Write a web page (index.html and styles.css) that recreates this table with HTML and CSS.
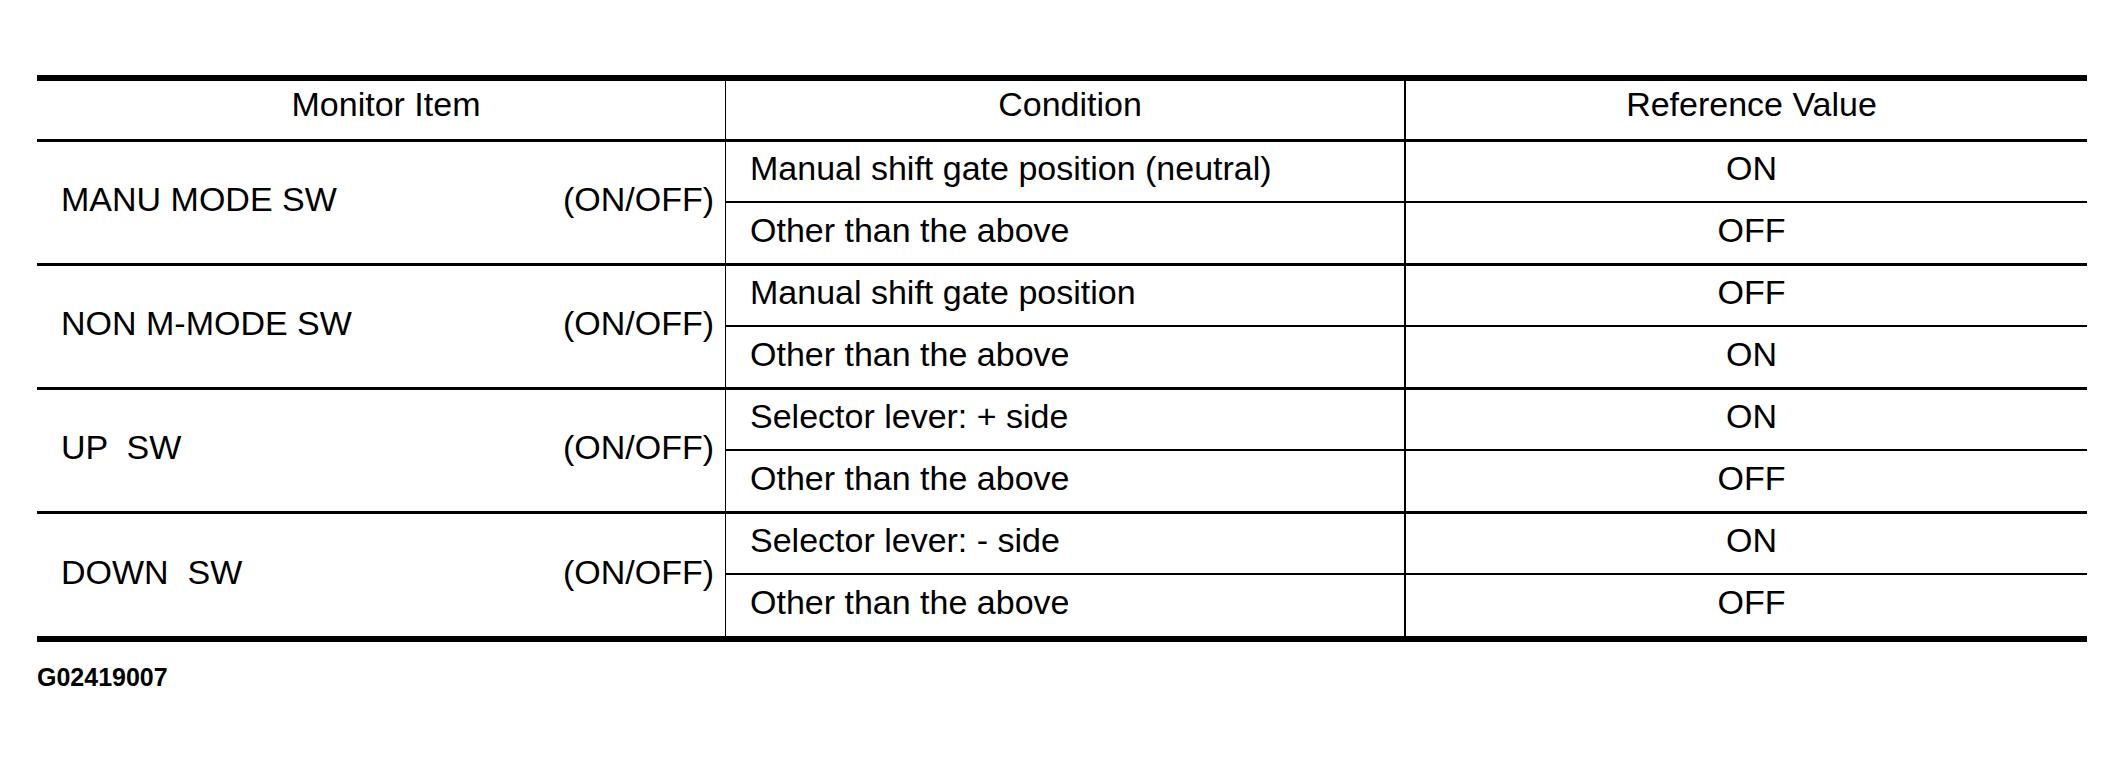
FILE: index.html
```html
<!DOCTYPE html>
<html lang="en">
<head>
<meta charset="utf-8">
<title>Monitor Items</title>
<link rel="stylesheet" href="styles.css">
</head>
<body>
<div class="page">
  <div class="spec">
    <div class="th c1">Monitor Item</div>
    <div class="th c2">Condition</div>
    <div class="th c3">Reference Value</div>

    <div class="item c1"><span class="name">MANU MODE SW</span><span class="unit">(ON/OFF)</span></div>
    <div class="cond c2 first">Manual shift gate position (neutral)</div>
    <div class="val c3 first">ON</div>
    <div class="cond c2 second">Other than the above</div>
    <div class="val c3 second">OFF</div>

    <div class="item c1"><span class="name">NON M-MODE SW</span><span class="unit">(ON/OFF)</span></div>
    <div class="cond c2 first">Manual shift gate position</div>
    <div class="val c3 first">OFF</div>
    <div class="cond c2 second">Other than the above</div>
    <div class="val c3 second">ON</div>

    <div class="item c1"><span class="name">UP  SW</span><span class="unit">(ON/OFF)</span></div>
    <div class="cond c2 first">Selector lever: + side</div>
    <div class="val c3 first">ON</div>
    <div class="cond c2 second">Other than the above</div>
    <div class="val c3 second">OFF</div>

    <div class="item c1 last"><span class="name">DOWN  SW</span><span class="unit">(ON/OFF)</span></div>
    <div class="cond c2 first">Selector lever: - side</div>
    <div class="val c3 first">ON</div>
    <div class="cond c2 second last">Other than the above</div>
    <div class="val c3 second last">OFF</div>
  </div>
  <div class="code">G02419007</div>
</div>
</body>
</html>
```

FILE: styles.css
```css
html, body {
  margin: 0;
  padding: 0;
  background: #fff;
}

body {
  font-family: "Liberation Sans", Arial, sans-serif;
  color: #000;
}

.page {
  padding: 75px 0 0 37px;
}

.spec {
  display: grid;
  grid-template-columns: 689px 680px 681px;
  width: 2050px;
  border-top: 6px solid #000;
  border-bottom: 6px solid #000;
  font-size: 34px;
}

.spec > div {
  box-sizing: border-box;
  display: flex;
  align-items: center;
  padding-bottom: 6px;
  white-space: pre;
}

.c1 {
  border-right: 1px solid #000;
}

.c2 {
  border-right: 2px solid #000;
}

.spec > .th {
  height: 61px;
  justify-content: center;
  border-bottom: 3px solid #000;
  padding-left: 10px;
  padding-bottom: 11px;
}

.item {
  grid-row: span 2;
  justify-content: space-between;
  padding-left: 24px;
  padding-right: 11px;
  border-bottom: 3px solid #000;
}

.first {
  height: 61px;
  border-bottom: 2px solid #000;
}

.second {
  height: 63px;
  border-bottom: 3px solid #000;
}

.spec > .last {
  border-bottom: 0;
}

.second.last {
  height: 61px;
}

.cond {
  padding-left: 24px;
}

.val {
  justify-content: center;
  padding-left: 10px;
}

.code {
  margin-top: 23px;
  font-size: 25px;
  font-weight: bold;
  line-height: 1;
}
```
